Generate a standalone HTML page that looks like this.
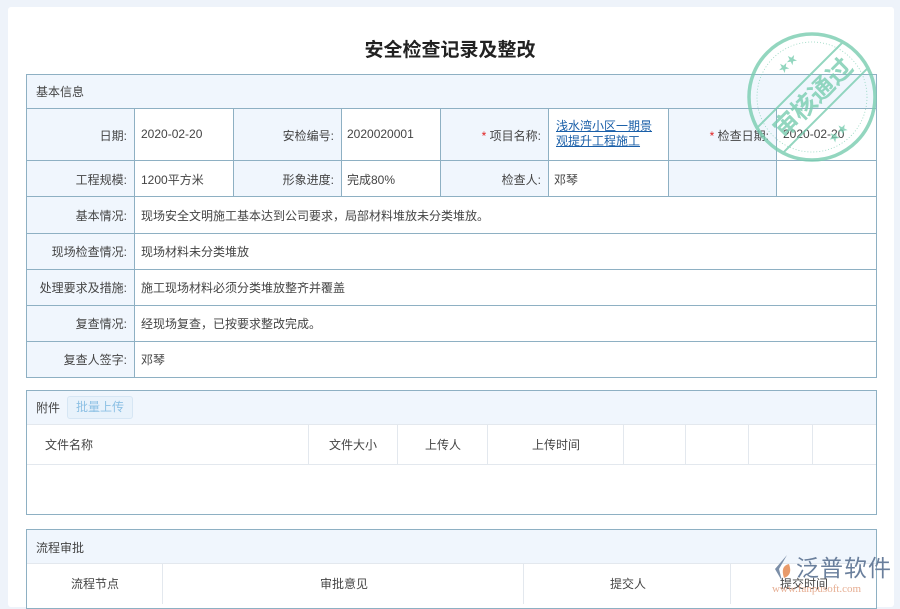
<!DOCTYPE html>
<html><head><meta charset="utf-8"><style>
*{margin:0;padding:0;box-sizing:border-box}
body{width:900px;height:600px;overflow:hidden;background:#eef3fa;font-family:"Liberation Sans","Noto Sans CJK SC",sans-serif;color:#444;font-size:12px;position:relative}
.card{position:absolute;left:8px;top:7px;width:886px;height:600px;background:#fff;border-radius:3px}
.title{position:absolute;left:0;width:900px;top:35px;text-align:center;font-size:19px;font-weight:bold;color:#222}
.a{position:absolute}
.bd{border:1px solid #8eb0c3}
.lbl{background:#f0f6fd}
.t{position:absolute;white-space:nowrap}
.vl{position:absolute;width:1px;background:#8eb0c3}
.hl{position:absolute;height:1px;background:#8eb0c3}
.gl{position:absolute;background:#e3e8ee}
.r{text-align:right}
.star{color:#e02020}
a{color:#1a5fa8;text-decoration:underline}
</style></head><body>
<div class="card"></div>
<div class="title">安全检查记录及整改</div>

<div class="a bd" style="left:26px;top:74px;width:851px;height:304px;background:#fff"></div>
<div class="a lbl" style="left:27px;top:75px;width:849px;height:33px"></div>
<div class="a lbl" style="left:27px;top:109px;width:107px;height:268px"></div>
<div class="a lbl" style="left:234px;top:109px;width:107px;height:87px"></div>
<div class="a lbl" style="left:441px;top:109px;width:107px;height:87px"></div>
<div class="a lbl" style="left:669px;top:109px;width:107px;height:87px"></div>
<div class="hl" style="left:26px;top:108px;width:851px"></div>
<div class="hl" style="left:26px;top:160px;width:851px"></div>
<div class="hl" style="left:26px;top:196px;width:851px"></div>
<div class="hl" style="left:26px;top:233px;width:851px"></div>
<div class="hl" style="left:26px;top:269px;width:851px"></div>
<div class="hl" style="left:26px;top:305px;width:851px"></div>
<div class="hl" style="left:26px;top:341px;width:851px"></div>
<div class="vl" style="left:134px;top:108px;height:270px"></div>
<div class="vl" style="left:233px;top:108px;height:88px"></div>
<div class="vl" style="left:341px;top:108px;height:88px"></div>
<div class="vl" style="left:440px;top:108px;height:88px"></div>
<div class="vl" style="left:548px;top:108px;height:88px"></div>
<div class="vl" style="left:668px;top:108px;height:88px"></div>
<div class="vl" style="left:776px;top:108px;height:88px"></div>
<div class="t" style="left:36px;top:83px">基本信息</div>
<div class="t r" style="left:30px;width:97px;top:127px">日期:</div>
<div class="t" style="left:141px;top:127px">2020-02-20</div>
<div class="t r" style="left:237px;width:97px;top:127px">安检编号:</div>
<div class="t" style="left:347px;top:127px">2020020001</div>
<div class="t r" style="left:444px;width:97px;top:127px"><span class="star">*</span> 项目名称:</div>
<div class="t" style="left:556px;top:119px;line-height:15px"><a>浅水湾小区一期景</a><br><a>观提升工程施工</a></div>
<div class="t r" style="left:672px;width:97px;top:127px"><span class="star">*</span> 检查日期:</div>
<div class="t" style="left:783px;top:127px">2020-02-20</div>
<div class="t r" style="left:30px;width:97px;top:171px">工程规模:</div>
<div class="t" style="left:141px;top:171px">1200平方米</div>
<div class="t r" style="left:237px;width:97px;top:171px">形象进度:</div>
<div class="t" style="left:347px;top:171px">完成80%</div>
<div class="t r" style="left:444px;width:97px;top:171px">检查人:</div>
<div class="t" style="left:554px;top:171px">邓琴</div>
<div class="t r" style="left:30px;width:97px;top:207px">基本情况:</div>
<div class="t" style="left:141px;top:207px">现场安全文明施工基本达到公司要求，局部材料堆放未分类堆放。</div>
<div class="t r" style="left:30px;width:97px;top:243px">现场检查情况:</div>
<div class="t" style="left:141px;top:243px">现场材料未分类堆放</div>
<div class="t r" style="left:30px;width:97px;top:279px">处理要求及措施:</div>
<div class="t" style="left:141px;top:279px">施工现场材料必须分类堆放整齐并覆盖</div>
<div class="t r" style="left:30px;width:97px;top:315px">复查情况:</div>
<div class="t" style="left:141px;top:315px">经现场复查，已按要求整改完成。</div>
<div class="t r" style="left:30px;width:97px;top:351px">复查人签字:</div>
<div class="t" style="left:141px;top:351px">邓琴</div>

<div class="a bd" style="left:26px;top:390px;width:851px;height:125px;background:#fff"></div>
<div class="a lbl" style="left:27px;top:391px;width:849px;height:33px"></div>
<div class="gl" style="left:27px;top:424px;width:849px;height:1px"></div>
<div class="gl" style="left:27px;top:464px;width:849px;height:1px"></div>
<div class="gl" style="left:308px;top:425px;width:1px;height:39px"></div>
<div class="gl" style="left:397px;top:425px;width:1px;height:39px"></div>
<div class="gl" style="left:487px;top:425px;width:1px;height:39px"></div>
<div class="gl" style="left:623px;top:425px;width:1px;height:39px"></div>
<div class="gl" style="left:685px;top:425px;width:1px;height:39px"></div>
<div class="gl" style="left:748px;top:425px;width:1px;height:39px"></div>
<div class="gl" style="left:812px;top:425px;width:1px;height:39px"></div>
<div class="t" style="left:36px;top:399px">附件</div>
<div class="a" style="left:67px;top:396px;width:66px;height:23px;border:1px solid #d6e6f4;border-radius:3px;background:#e8f2fb;color:#8cc0e4;text-align:center;line-height:21px">批量上传</div>
<div class="t" style="left:45px;top:436px">文件名称</div>
<div class="t" style="left:329px;top:436px">文件大小</div>
<div class="t" style="left:425px;top:436px">上传人</div>
<div class="t" style="left:532px;top:436px">上传时间</div>

<div class="a bd" style="left:26px;top:529px;width:851px;height:80px;background:#fff"></div>
<div class="a lbl" style="left:27px;top:530px;width:849px;height:33px"></div>
<div class="gl" style="left:27px;top:563px;width:849px;height:1px"></div>
<div class="gl" style="left:162px;top:564px;width:1px;height:40px"></div>
<div class="gl" style="left:523px;top:564px;width:1px;height:40px"></div>
<div class="gl" style="left:730px;top:564px;width:1px;height:40px"></div>
<div class="t" style="left:36px;top:539px">流程审批</div>
<div class="t" style="left:71px;top:575px">流程节点</div>
<div class="t" style="left:320px;top:575px">审批意见</div>
<div class="t" style="left:610px;top:575px">提交人</div>

<svg class="a" style="left:742px;top:27px" width="140" height="140" viewBox="0 0 140 140">
<defs><clipPath id="c"><circle cx="70" cy="70" r="62"/></clipPath></defs>
<g fill="none" stroke="#79cdb0" opacity="0.8">
<circle cx="70" cy="70" r="63" stroke-width="3.5"/>
<circle cx="70" cy="70" r="55" stroke-width="0.8" stroke-dasharray="1 2"/>
<g clip-path="url(#c)" transform="rotate(-45 70 70)" stroke-width="2">
<line x1="0" y1="53" x2="140" y2="53"/>
<line x1="0" y1="89" x2="140" y2="89"/>
</g>
</g>
<g fill="#79cdb0" opacity="0.8" font-family="Liberation Sans,Noto Sans CJK SC,sans-serif">
<text x="70" y="80" font-size="25" font-weight="bold" text-anchor="middle" transform="rotate(-45 70 70)">审核通过</text>
<text x="36" y="44" font-size="11" transform="rotate(-45 42 40)">★★</text>
<text x="86" y="112" font-size="11" transform="rotate(-45 94 108)">★★</text>
</g>
</svg>

<div class="t" style="left:780px;top:575px">提交时间</div>
<svg class="a" style="left:770px;top:553px" width="26" height="30" viewBox="0 0 26 30">
<path d="M17 2 L5 16 L12 28 L9 16 Z" fill="#7c8fa8"/>
<path d="M19 11 Q10 13 14 25 Q23 22 19 11Z" fill="#e89a6a"/>
</svg>
<div class="t" style="left:796px;top:549px;font-size:23px;color:#6a7f9c;letter-spacing:1px">泛普软件</div>
<div class="t" style="left:772px;top:583px;font-size:11px;color:#e2a080;font-family:'Liberation Serif',serif;opacity:0.85">www.fanpusoft.com</div>
</body></html>
